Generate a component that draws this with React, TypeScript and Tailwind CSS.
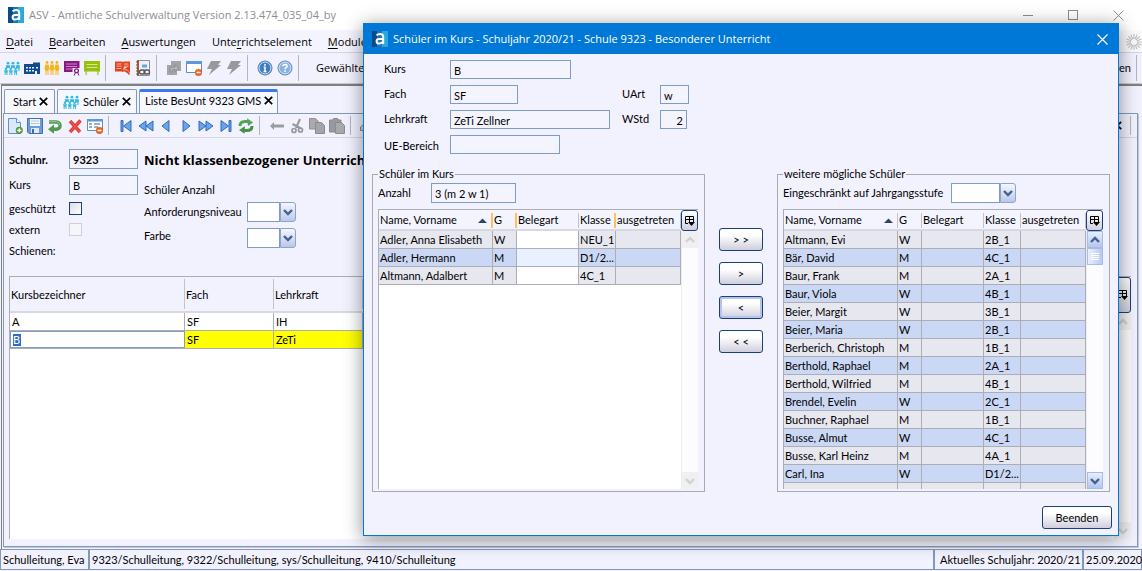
import React from "react";

type Student = { name: string; g: string; klasse: string };

const enrolled: Student[] = [
  { name: "Adler, Anna Elisabeth", g: "W", klasse: "NEU_1" },
  { name: "Adler, Hermann", g: "M", klasse: "D1/2..." },
  { name: "Altmann, Adalbert", g: "M", klasse: "4C_1" },
];

const available: Student[] = [
  { name: "Altmann, Evi", g: "W", klasse: "2B_1" },
  { name: "Bär, David", g: "M", klasse: "4C_1" },
  { name: "Baur, Frank", g: "M", klasse: "2A_1" },
  { name: "Baur, Viola", g: "W", klasse: "4B_1" },
  { name: "Beier, Margit", g: "W", klasse: "3B_1" },
  { name: "Beier, Maria", g: "W", klasse: "2B_1" },
  { name: "Berberich, Christoph", g: "M", klasse: "1B_1" },
  { name: "Berthold, Raphael", g: "M", klasse: "2A_1" },
  { name: "Berthold, Wilfried", g: "M", klasse: "4B_1" },
  { name: "Brendel, Evelin", g: "W", klasse: "2C_1" },
  { name: "Buchner, Raphael", g: "M", klasse: "1B_1" },
  { name: "Busse, Almut", g: "W", klasse: "4C_1" },
  { name: "Busse, Karl Heinz", g: "M", klasse: "4A_1" },
  { name: "Carl, Ina", g: "W", klasse: "D1/2..." },
  { name: "", g: "", klasse: "" },
];

/* ---------- icons ---------- */

function Svg({ children }: { children: React.ReactNode }) {
  return (
    <svg width="16" height="16" viewBox="0 0 16 16" className="block shrink-0" aria-hidden="true">
      {children}
    </svg>
  );
}

function AppLogo() {
  return (
    <Svg>
      <rect width="16" height="16" fill="#0b4a86" />
      <rect x="10" width="6" height="16" fill="#2ba9dc" />
      <rect x="5" width="5" height="16" fill="#1878b4" />
      <path d="M4.500 4.300Q6 3 8.200 3Q11.200 3 11.200 6V13M11.200 8H7.200Q4.600 8 4.600 10.200Q4.600 12.600 7.200 12.600Q9.800 12.600 11 10.600" fill="none" stroke="#fff" strokeWidth="2" />
    </Svg>
  );
}

function Group() {
  return (
    <Svg>
      <g fill="#35b8db">
        <circle cx="4" cy="3.200" r="1.400" />
        <circle cx="9" cy="3.200" r="1.400" />
        <circle cx="14" cy="3.200" r="1.400" />
        <path d="M1.800 5.200h4.400L5.800 8H2.200zM6.800 5.200h4.400l-.4 2.800H7.200zM11.800 5.200H16L15.400 11h-1V8.500h-2.200z" />
        <circle cx="2" cy="8.700" r="1.300" />
        <circle cx="6.800" cy="8.700" r="1.300" />
        <circle cx="11.600" cy="8.700" r="1.300" />
        <path d="M0 10.300h4.100l-.6 2V15h-1v-2.300h-.9V15h-1v-2.700zM4.700 10.300h4.200l-.6 2V15h-1v-2.300h-.9V15h-1v-2.700zM9.500 10.300h4.200l-.6 2V15h-1v-2.300h-.9V15h-1v-2.700z" />
      </g>
    </Svg>
  );
}

function School() {
  return (
    <Svg>
      <path d="M0 4h9V2.500h7V14h-3v-3h-2v3H0z" fill="#0f4c8f" />
      <path d="M2 7h2v1.500H2zM5 7h2v1.500H5zM8 7h2v1.500H8zM2 10h2v1.500H2zM5 10h2v1.500H5zM8 10h2v1.500H8zM12 7h2v1.500h-2z" fill="#e6ecf8" />
    </Svg>
  );
}

function People() {
  return (
    <Svg>
      <g fill="#f5b417">
        <circle cx="3" cy="2.500" r="1.400" />
        <circle cx="8" cy="2.500" r="1.400" />
        <circle cx="13" cy="2.500" r="1.400" />
        <path d="M1.300 4.500h3.400l.8 5H4.500V15h-1v-4h-1v4h-1V9.500H.5zM6.300 4.500h3.400l.8 5H9.500V15h-1v-4h-1v4h-1V9.500h-1zM11.300 4.500h3.400l.8 5h-1V15h-1v-4h-1v4h-1V9.500h-1z" />
      </g>
    </Svg>
  );
}

function Board({ certificate = false }: { certificate?: boolean }) {
  return certificate ? (
    <Svg>
      <path d="M0 1h15.500v11H0z" fill="#8a1683" />
      <path d="M2 4h11M2 6.500h11M2 9h6" stroke="#c98bc5" fill="none" />
      <path d="M8.500 8h7.500v8H8.500z" fill="#f2f2ff" />
      <circle cx="12.500" cy="10.800" r="1.900" fill="none" stroke="#8a1683" strokeWidth="1.300" />
      <path d="M11.500 12.500L10 15.500M13.500 12.500L15 15.500" stroke="#8a1683" />
    </Svg>
  ) : (
    <Svg>
      <path d="M0 1h16v10.500h-1.500V15h-1.200v-3.500H2.700V15H1.500v-3.500H0z" fill="#97bf0d" />
      <path d="M2.500 4.500h11M2.500 7.500h11" stroke="#d5e78f" fill="none" />
    </Svg>
  );
}

function RedBook() {
  return (
    <Svg>
      <path d="M0 1.500h7l.7.7.7-.7H15v11h-4l-1-1H8.500l-.8.7-.7-.7H0z" fill="#e2431e" />
      <path d="M1.500 4h5M1.500 6.200h5M1.500 8.500h5M9 4h4.500M9 6.200h4.500" stroke="#fbd5cb" fill="none" strokeWidth=".8" />
      <path d="M9 7.500l4.800 4.800M9 7.500v2.700M9 7.500h2.700" stroke="#f7d2c9" fill="none" />
      <path d="M11.500 11l3 3.500" stroke="#e2431e" strokeWidth="1.500" />
    </Svg>
  );
}

function Notebook() {
  return (
    <Svg>
      <path d="M3 .5h11.500v15H3z" fill="#eef1f6" stroke="#8b8f99" />
      <path d="M3 0v16" stroke="#a2653a" strokeWidth="2" />
      <path d="M1 2h3M1 5h3M1 8h3M1 11h3M1 14h3" stroke="#6e5344" />
      <path d="M7 4.500h5v3H7z" fill="#6aa2de" />
      <rect x="4.500" y="10" width="5.500" height="4" rx="2" fill="none" stroke="#555" strokeWidth="1.300" />
      <rect x="9" y="10" width="5.500" height="4" rx="2" fill="none" stroke="#555" strokeWidth="1.300" />
    </Svg>
  );
}

function GreyPages() {
  return (
    <Svg>
      <path d="M5 1h10v10h-4v4H1V5h4z" fill="#a3a3a8" />
      <path d="M4 12v-3q0-2 3-2h2V4.500L13 8l-4 3.500V9.500H7.500Q6 9.500 6 12z" fill="#b4b4b9" stroke="#85858b" strokeWidth=".8" />
    </Svg>
  );
}

function Minus() {
  return (
    <g>
      <circle cx="12.500" cy="12.500" r="3.300" fill="#ee6a1f" stroke="#c9480c" strokeWidth=".5" />
      <path d="M10.500 12.500h4" stroke="#fff" strokeWidth="1.400" />
    </g>
  );
}

function WindowMinus() {
  return (
    <Svg>
      <path d="M.5 1.500h15v11H.5z" fill="#fff" stroke="#5c8fca" />
      <path d="M0 1h16v3H0z" fill="#5f97d8" />
      <Minus />
    </Svg>
  );
}

function FormMinus() {
  return (
    <Svg>
      <path d="M.5 1.500h15v11H.5z" fill="#fff" stroke="#5c8fca" />
      <path d="M0 1h16v2.500H0z" fill="#5f97d8" />
      <path d="M2 6h3M7 6h6M2 9h3M7 9h4" stroke="#7894b5" strokeWidth="1.500" />
      <Minus />
    </Svg>
  );
}

function Bolt() {
  return (
    <Svg>
      <path d="M5 1h10l-3 4h3L3 15l3-6H1z" fill="#98989d" />
    </Svg>
  );
}

function Disc({ kind }: { kind: "info" | "help" }) {
  const fill = kind === "info" ? "#3f7fc1" : "#8db4dc";
  return (
    <Svg>
      <circle cx="8" cy="8" r="7" fill={fill} stroke="#5a84b4" />
      <circle cx="8" cy="8" r="5.900" fill="none" stroke="#d6e5f5" strokeWidth=".9" />
      {kind === "info" ? (
        <path d="M8 4v1.700M6.700 7.200H8V11.500M6.500 11.500h3" stroke="#fff" strokeWidth="1.500" fill="none" />
      ) : (
        <path d="M5.900 6.300Q6 4.400 8 4.400Q10.200 4.500 10.100 6.100Q10 7.200 8.800 7.800Q8 8.300 8 9.300M8 10.300v1.600" stroke="#fff" strokeWidth="1.500" fill="none" />
      )}
    </Svg>
  );
}

function NewDoc() {
  return (
    <Svg>
      <path d="M1.500.5h8l4 4v11h-12z" fill="#d9e9fa" stroke="#5b93cf" />
      <path d="M9.500.5v4h4" fill="#fff" stroke="#5b93cf" />
      <circle cx="12.300" cy="12.300" r="3.200" fill="#6aa548" stroke="#3f7a25" strokeWidth=".6" />
      <path d="M10.300 12.300h4M12.300 10.300v4" stroke="#fff" strokeWidth="1.200" />
    </Svg>
  );
}

function Save() {
  return (
    <Svg>
      <path d="M.5.500h15v15H2l-1.500-1.500z" fill="#6b9ddb" stroke="#3f72ae" />
      <path d="M3 1h10v7H3z" fill="#f3f7fc" />
      <path d="M4 3h8M4 5.500h8" stroke="#b4c6da" />
      <path d="M4 10h8v5H4z" fill="#e3e9f0" />
      <path d="M5 11h2v4H5z" fill="#3d6ca5" />
    </Svg>
  );
}

function Undo() {
  return (
    <Svg>
      <path d="M2 4h7.500a3.500 3.500 0 0 1 0 7.200H5" fill="none" stroke="#4d9a50" strokeWidth="3.400" />
      <path d="M7 6.500v9.300L1 11.200z" fill="#4d9a50" />
      <path d="M2 3.700h7.500a3.700 3.700 0 0 1 3.400 3.500" fill="none" stroke="#93cb91" strokeWidth="1" />
    </Svg>
  );
}

function RedCross() {
  return (
    <Svg>
      <path d="M3 3l10 11M13.500 2.500L3 14" stroke="#e33b38" strokeWidth="3.400" />
      <path d="M3 3l10 11M13.500 2.500L3 14" stroke="#f0605c" strokeWidth="1" />
    </Svg>
  );
}

function Nav({ shape }: { shape: "first" | "rewind" | "prev" | "next" | "forward" | "last" }) {
  const paths = {
    first: "M3 2.500h2v11H3zM13 2.500v11L5.500 8z",
    rewind: "M8 3v10L1 8zM15 3v10L8 8z",
    prev: "M11 2.500v11L4 8z",
    next: "M5 2.500v11l7-5.500z",
    forward: "M1 3v10l7-5zM8 3v10l7-5z",
    last: "M11 2.500h2v11h-2zM3 2.500v11L10.500 8z",
  };
  return (
    <Svg>
      <path d={paths[shape]} fill="#6aa5ec" stroke="#2461b5" strokeWidth=".9" />
    </Svg>
  );
}

function Refresh() {
  return (
    <Svg>
      <path d="M2 8Q2 3.500 7 3.500H10" fill="none" stroke="#55a356" strokeWidth="3" />
      <path d="M9 .300l6 4.200-5 3.500z" fill="#55a356" />
      <path d="M14 8Q14 12.500 9 12.500H6" fill="none" stroke="#459348" strokeWidth="3" />
      <path d="M7 8.300l-6 3.800 5.500 3.600z" fill="#459348" />
    </Svg>
  );
}

function GreyArrow() {
  return (
    <Svg>
      <path d="M1 8l4-4v2.500h10v3H5V12z" fill="#9b9ba0" />
    </Svg>
  );
}

function Scissors() {
  return (
    <Svg>
      <path d="M11 1L7 10M3.500 6L12 10.500" stroke="#97979c" strokeWidth="2" />
      <circle cx="5" cy="12.500" r="2" fill="none" stroke="#97979c" strokeWidth="1.700" />
      <circle cx="11.500" cy="12" r="2" fill="none" stroke="#97979c" strokeWidth="1.700" />
    </Svg>
  );
}

function Copy() {
  return (
    <Svg>
      <path d="M.500.500h6l3 3v7.500h-9z" fill="#a9a9ae" stroke="#909096" />
      <path d="M6.500 4.500h6l3 3v8h-9z" fill="#a4a4a9" stroke="#8a8a90" />
    </Svg>
  );
}

function Paste() {
  return (
    <Svg>
      <path d="M.500 2h3l1-1.500h4L9.500 2H12v12H.500z" fill="#98989d" stroke="#8a8a90" />
      <path d="M6.500 4.500h6l3 3v8h-9z" fill="#a8a8ad" stroke="#8a8a90" />
    </Svg>
  );
}

function Print() {
  return (
    <Svg>
      <path d="M4.500 1.500h8v6h-8z" fill="#ddd" stroke="#888" />
      <path d="M.500 12.500V9l4-3.500h8l3 3.500v3.500z" fill="#d4d4d8" stroke="#888" />
    </Svg>
  );
}

function CloseMark() {
  return (
    <svg width="9" height="9" viewBox="0 0 9 9" className="block shrink-0" aria-hidden="true">
      <path d="M.800.800l7.400 7.400M8.200.800L.800 8.200" stroke="#000" strokeWidth="1.700" />
    </svg>
  );
}

function Chevron({ up = false, color = "#48608f" }: { up?: boolean; color?: string }) {
  return (
    <svg width="10" height="8" viewBox="0 0 10 8" className="block" aria-hidden="true">
      <path d={up ? "M1 6l4-4 4 4" : "M1 2l4 4 4-4"} fill="none" stroke={color} strokeWidth="2.400" />
    </svg>
  );
}

function ColumnGlyph() {
  return (
    <svg width="11" height="12" viewBox="0 0 11 12" className="block shrink-0" aria-hidden="true">
      <path d="M4 8.500H1.500v-7h8V7M1 4.500h9M5.500 1.500v6" fill="none" stroke="#000" />
      <path d="M4 7h7L7.500 11z" />
    </svg>
  );
}

function Spinner() {
  return (
    <Svg>
      <g stroke="#bdbdbd" strokeWidth="1.100">
        <path d="M8 0v5M8 11v5M0 8h5M11 8h5M2.300 2.300l3.600 3.600M10.100 10.100l3.600 3.600M13.700 2.300l-3.600 3.600M5.900 10.100l-3.600 3.600M4.900.600l1.900 4.600M9.200 10.800l1.900 4.600M11.100.600L9.200 5.200M6.800 10.800l-1.900 4.600M.600 4.900l4.600 1.900M10.800 9.200l4.600 1.900M15.400 4.900l-4.600 1.900M5.200 9.200L.600 11.100" />
      </g>
    </Svg>
  );
}

/* ---------- small controls ---------- */

function Sep() {
  return <span className="mr-[5px] ml-px w-px self-stretch bg-[#b4b4bc]" />;
}

function Tool({ label, children }: { label: string; children: React.ReactNode }) {
  return (
    <button type="button" aria-label={label} className="block shrink-0">
      {children}
    </button>
  );
}

function Field({ id, value, className }: { id: string; value: string; className: string }) {
  return (
    <input
      id={id}
      defaultValue={value}
      className={`border border-[#7f9dc0] bg-[#f4f4ff] px-[3px] pt-px text-black outline-none ${className}`}
    />
  );
}

function Combo({ id, className }: { id: string; className: string }) {
  return (
    <span className={`flex h-5 ${className}`}>
      <select id={id} className="min-w-0 flex-1 appearance-none border border-[#7f9dc0] bg-white outline-none">
        <option></option>
      </select>
      <span className="flex w-4 items-center justify-center rounded-r-[3px] border border-[#8ea4cc] bg-linear-to-b from-[#f4f7ff] to-[#b9c8ea]">
        <Chevron />
      </span>
    </span>
  );
}

function PushButton({ children, className, focused = false }: { children: React.ReactNode; className: string; focused?: boolean }) {
  return (
    <button
      type="button"
      className={`h-[23px] rounded-[3px] border border-[#1d3f78] bg-linear-to-b from-white from-30% to-[#cfcfdd] ${
        focused ? "ring-2 ring-[#b4c4ee] ring-inset" : ""
      } ${className}`}
    >
      {children}
    </button>
  );
}

function ColumnControl({ className }: { className: string }) {
  return (
    <button
      type="button"
      aria-label="Spalten"
      className={`flex w-[17px] items-center justify-center rounded-[3px] border border-[#1d3f78] bg-linear-to-b from-white to-[#cfcfdd] ${className}`}
    >
      <ColumnGlyph />
    </button>
  );
}

function ScrollEnd({ up = false, disabled = false }: { up?: boolean; disabled?: boolean }) {
  return (
    <button
      type="button"
      aria-label={up ? "Nach oben" : "Nach unten"}
      disabled={disabled}
      className={`flex h-[17px] w-4 shrink-0 items-center justify-center ${
        disabled ? "bg-[#f0f0f2]" : "border border-[#a9bbe0] bg-linear-to-b from-[#e6eeff] to-[#b5c7ee]"
      }`}
    >
      <Chevron up={up} color={disabled ? "#d2d2d6" : "#48608f"} />
    </button>
  );
}

function ScrollBar({ disabled = false }: { disabled?: boolean }) {
  return (
    <div className="flex min-h-0 w-[17px] flex-1 flex-col items-start border-l border-[#ececf4] bg-[#fcfcff]">
      <ScrollEnd up disabled={disabled} />
      {!disabled && (
        <div className="flex h-[17px] w-4 flex-col items-center justify-center gap-px border border-[#a9bbe0] bg-linear-to-r from-[#e9f0ff] to-[#b9caf0]">
          <span className="h-px w-2 bg-white" />
          <span className="h-px w-2 bg-white" />
          <span className="h-px w-2 bg-white" />
          <span className="h-px w-2 bg-white" />
        </div>
      )}
      <div className="flex-1" />
      <ScrollEnd disabled={disabled} />
    </div>
  );
}

/* ---------- student tables ---------- */

function HeadCell({ text, mark = false, sorted = false }: { text: string; mark?: boolean; sorted?: boolean }) {
  return (
    <th className="h-[21px] overflow-hidden border-b-2 border-[#d8d8e4] p-0 font-normal">
      <span className="flex h-[19px] items-center pt-px pl-px">
        <span className="flex-1 text-left whitespace-nowrap">{text}</span>
        {sorted && (
          <svg width="9" height="5" viewBox="0 0 9 5" className="mr-1 shrink-0" aria-hidden="true">
            <path d="M0 5L4.500.500 9 5z" fill="#2f4562" />
          </svg>
        )}
        <span className={mark ? "h-[15px] w-[2px] shrink-0 bg-[#fcc160]" : "h-[15px] w-px shrink-0 bg-[#c2c2cc]"} />
      </span>
    </th>
  );
}

function StudentTable({ rows, marks = false, editable = false }: { rows: Student[]; marks?: boolean; editable?: boolean }) {
  const cell = "h-[18px] truncate border-r border-b border-[#adadb5] p-0 pl-px leading-[17px]";
  return (
    <div className="flex min-h-0 flex-1 border-t border-l border-[#adadb5]">
      <div className="min-w-0 flex-1 overflow-hidden bg-white">
        <table className="w-full table-fixed border-separate border-spacing-0">
          <colgroup>
            <col />
            <col className="w-[24px]" />
            <col className="w-[62px]" />
            <col className="w-[37px]" />
            <col className="w-[65px]" />
          </colgroup>
          <thead className="bg-[#f4f4ff]">
            <tr>
              <HeadCell text="Name, Vorname" sorted mark={marks} />
              <HeadCell text="G" mark={marks} />
              <HeadCell text="Belegart" />
              <HeadCell text="Klasse" mark={marks} />
              <HeadCell text="ausgetreten" />
            </tr>
          </thead>
          <tbody>
            {rows.map((r, i) => (
              <tr key={i} className={i % 2 ? "bg-[#cbd8f5]" : "bg-[#e7e7f0]"}>
                <td className={cell}>{r.name}</td>
                <td className={cell}>{r.g}</td>
                <td className={`${cell} ${editable ? (i % 2 ? "bg-[#e9f0ff]" : "bg-white") : ""}`} />
                <td className={cell}>{r.klasse}</td>
                <td className={cell} />
              </tr>
            ))}
          </tbody>
        </table>
      </div>
      <div className="flex w-[17px] shrink-0 flex-col">
        <ColumnControl className="h-[21px]" />
        <ScrollBar disabled={editable} />
      </div>
    </div>
  );
}

function StudentGroup({ title, top, children }: { title: string; top: React.ReactNode; children: React.ReactNode }) {
  return (
    <fieldset className="flex w-[333px] min-w-0 flex-col border border-[#a9a9b3] pr-[6px] pb-[2px] pl-[5px]">
      <legend className="h-[14px] px-px leading-[14px]">{title}</legend>
      <div className="mt-[2px] mb-[6px] flex h-5 shrink-0 items-center">{top}</div>
      {children}
    </fieldset>
  );
}

/* ---------- dialog ---------- */

function Dialog() {
  return (
    <section
      role="dialog"
      aria-label="Schüler im Kurs"
      className="absolute top-[23px] right-[23px] bottom-[35px] left-[363px] flex flex-col border border-[#0078d7] bg-[#f2f2ff] shadow-[0_3px_18px_rgba(0,0,0,0.45)]"
    >
      <header className="flex h-[30px] shrink-0 items-center bg-[#0078d7] pr-[10px] pl-2 text-white">
        <AppLogo />
        <h2 className="ml-[5px] flex-1 font-['Open_Sans','Noto_Sans',sans-serif]">
          Schüler im Kurs - Schuljahr 2020/21 - Schule 9323 - Besonderer Unterricht
        </h2>
        <button type="button" aria-label="Schließen">
          <svg width="11" height="11" viewBox="0 0 11 11" className="block" aria-hidden="true">
            <path d="M.500.500l10 10M10.500.500l-10 10" stroke="#fff" strokeWidth="1.200" />
          </svg>
        </button>
      </header>

      <div className="flex min-h-0 flex-1 flex-col">
        <div className="grid shrink-0 grid-cols-[66px_172px_38px_auto] gap-y-[6px] pt-[6px] pl-5">
          <label htmlFor="d-kurs" className="leading-[17px]">Kurs</label>
          <Field id="d-kurs" value="B" className="col-span-3 h-[19px] w-[121px]" />
          <label htmlFor="d-fach" className="leading-[17px]">Fach</label>
          <Field id="d-fach" value="SF" className="h-[19px] w-[68px]" />
          <label htmlFor="d-uart" className="leading-[17px]">UArt</label>
          <Field id="d-uart" value="w" className="h-[19px] w-[29px]" />
          <label htmlFor="d-lehr" className="leading-[17px]">Lehrkraft</label>
          <Field id="d-lehr" value="ZeTi Zellner" className="h-[19px] w-[160px]" />
          <label htmlFor="d-wstd" className="leading-[17px]">WStd</label>
          <Field id="d-wstd" value="2" className="h-[19px] w-[27px] text-right" />
          <label htmlFor="d-ue" className="leading-[21px]">UE-Bereich</label>
          <Field id="d-ue" value="" className="col-span-3 h-[19px] w-[110px]" />
        </div>

        <div className="mt-[11px] flex min-h-0 flex-1 justify-between px-2">
          <StudentGroup
            title="Schüler im Kurs"
            top={
              <>
                <label htmlFor="d-anz" className="w-[53px]">Anzahl</label>
                <Field id="d-anz" value="3 (m 2 w 1)" className="h-5 w-[85px]" />
              </>
            }
          >
            <StudentTable rows={enrolled} marks editable />
          </StudentGroup>
          <div className="flex flex-col gap-[11px] pt-[61px]">
            <PushButton className="w-[44px]">&gt; &gt;</PushButton>
            <PushButton className="w-[44px]">&gt;</PushButton>
            <PushButton className="w-[44px]" focused>&lt;</PushButton>
            <PushButton className="w-[44px]">&lt; &lt;</PushButton>
          </div>
          <StudentGroup
            title="weitere mögliche Schüler"
            top={
              <>
                <label htmlFor="d-jgst" className="w-[168px] whitespace-nowrap">Eingeschränkt auf Jahrgangsstufe</label>
                <Combo id="d-jgst" className="w-[65px]" />
              </>
            }
          >
            <StudentTable rows={available} />
          </StudentGroup>
        </div>

        <div className="flex shrink-0 justify-end pt-[14px] pr-[6px] pb-[6px]">
          <PushButton className="w-[70px]">Beenden</PushButton>
        </div>
      </div>
    </section>
  );
}

/* ---------- main window ---------- */

function MenuItem({ before = "", hot, after }: { before?: string; hot: string; after: string }) {
  return (
    <button type="button">
      {before}
      <span className="underline underline-offset-2">{hot}</span>
      {after}
    </button>
  );
}

function CourseTable() {
  const head = "h-[36px] border-b-2 border-[#d8d8e4] p-0 text-left font-normal";
  const cell = "h-[18px] border-r border-b border-[#adadb5] p-0 pl-[2px] leading-[17px]";
  return (
    <div className="mr-[6px] mb-[7px] ml-[5px] flex min-h-0 flex-1 border-t border-l border-[#adadb5]">
      <div className="min-w-0 flex-1 bg-white">
        <table className="w-full table-fixed border-separate border-spacing-0">
          <colgroup>
            <col className="w-[175px]" />
            <col className="w-[89px]" />
            <col className="w-[89px]" />
            <col />
          </colgroup>
          <thead className="bg-[#f2f2ff]">
            <tr>
              {["Kursbezeichner", "Fach", "Lehrkraft", ""].map((h) => (
                <th key={h} className={head}>
                  <span className="flex h-[30px] items-center border-r border-[#c2c2cc] pt-px pl-px">{h}</span>
                </th>
              ))}
            </tr>
          </thead>
          <tbody>
            <tr>
              <td className={cell}>A</td>
              <td className={cell}>SF</td>
              <td className={cell}>IH</td>
              <td className={cell} />
            </tr>
            <tr className="bg-[#ffff00]">
              <td className="h-[18px] border-b border-[#adadb5] bg-white p-0">
                <div className="flex h-[17px] items-center border border-[#7f9dc0] pl-[2px]">
                  <input aria-label="Kursbezeichner" defaultValue="B" className="h-3 w-2 bg-[#316ac5] text-white outline-none" />
                </div>
              </td>
              <td className={cell}>SF</td>
              <td className={cell}>ZeTi</td>
              <td className={cell} />
            </tr>
          </tbody>
        </table>
      </div>
      <div className="flex w-[17px] shrink-0 flex-col">
        <ColumnControl className="h-[36px]" />
        <ScrollBar disabled />
      </div>
    </div>
  );
}

export default function App() {
  const tab = "flex h-6 items-center gap-[3px] rounded-t-[2px] border border-b-0 border-[#8299bb] bg-[#f7f7ff]";
  return (
    <div className="relative flex h-screen flex-col overflow-hidden bg-[#f2f2ff] font-['Lato','Open_Sans',sans-serif] text-[11px] leading-[14px] text-black">
      <header className="flex h-[30px] shrink-0 items-center bg-white pr-[18px] pl-2 text-[#8e8e8e]">
        <AppLogo />
        <h1 className="ml-[5px] flex-1 font-['Open_Sans','Noto_Sans',sans-serif]">ASV - Amtliche Schulverwaltung Version 2.13.474_035_04_by</h1>
        <div className="flex items-center gap-[35px]">
          <button type="button" aria-label="Minimieren" className="h-px w-[10px] bg-[#8e8e8e]" />
          <button type="button" aria-label="Maximieren" className="size-[10px] border border-[#8e8e8e]" />
          <button type="button" aria-label="Fenster schließen">
            <svg width="11" height="11" viewBox="0 0 11 11" className="block" aria-hidden="true">
              <path d="M.500.500l10 10M10.500.500l-10 10" stroke="#8e8e8e" />
            </svg>
          </button>
        </div>
      </header>

      <nav className="flex h-[23px] shrink-0 items-center gap-4 border-b border-[#d5d5e6] bg-linear-to-r from-[#f2f2ff] to-[#fafafc] pt-px pl-[6px] font-['Open_Sans','Noto_Sans',sans-serif]">
        <MenuItem hot="D" after="atei" />
        <MenuItem hot="B" after="earbeiten" />
        <MenuItem hot="A" after="uswertungen" />
        <MenuItem before="Unte" hot="r" after="richtselement" />
        <MenuItem hot="M" after="odule" />
        <span className="ml-auto">
          <Spinner />
        </span>
      </nav>

      <div className="flex h-[31px] shrink-0 items-center gap-1 border-b border-[#c9c9d4] py-[2px] pl-1">
        <Tool label="Schüler"><Group /></Tool>
        <Tool label="Schule"><School /></Tool>
        <Tool label="Lehrkräfte"><People /></Tool>
        <Tool label="Abschluss"><Board certificate /></Tool>
        <Tool label="Unterricht"><Board /></Tool>
        <Sep />
        <Tool label="Verzeichnis"><RedBook /></Tool>
        <Tool label="Notizbuch"><Notebook /></Tool>
        <Sep />
        <Tool label="Fenster"><GreyPages /></Tool>
        <Tool label="Fenster schließen"><WindowMinus /></Tool>
        <Tool label="Aktion"><Bolt /></Tool>
        <Tool label="Weitere Aktion"><Bolt /></Tool>
        <Sep />
        <Tool label="Info"><Disc kind="info" /></Tool>
        <Tool label="Hilfe"><Disc kind="help" /></Tool>
        <Sep />
        <span className="ml-2 font-['Open_Sans','Noto_Sans',sans-serif]">Gewählte</span>
        <span className="ml-auto">en</span>
        <Sep />
      </div>

      <main className="ml-px flex min-h-0 flex-1 flex-col border-t-2 border-l border-[#808080] pr-1 pb-[2px] pl-px">
        <div className="flex h-[27px] shrink-0 items-end gap-[2px] pl-px">
          <div className={`${tab} w-[51px] pl-2`}>
            <span>Start</span>
            <CloseMark />
          </div>
          <div className={`${tab} w-[80px] pl-[5px]`}>
            <Group />
            <span className="pl-px">Schüler</span>
            <CloseMark />
          </div>
          <div className={`${tab} w-[139px] border-t-[3px] border-t-[#3b78f0] pb-1 pl-[5px]`}>
            <span>Liste BesUnt 9323 GMS</span>
            <CloseMark />
          </div>
        </div>

        <div className="flex min-h-0 flex-1 flex-col border border-[#8299bb] shadow-[1px_1px_0_#c6c6d4]">
          <div className="flex h-6 shrink-0 items-center gap-1 border-b border-[#d5d5e6] py-[2px] pr-[1px] pl-[3px]">
            <Tool label="Neu"><NewDoc /></Tool>
            <Tool label="Speichern"><Save /></Tool>
            <Tool label="Rückgängig"><Undo /></Tool>
            <Tool label="Löschen"><RedCross /></Tool>
            <Tool label="Maske"><FormMinus /></Tool>
            <Sep />
            <Tool label="Erster"><Nav shape="first" /></Tool>
            <Tool label="Zurückspulen"><Nav shape="rewind" /></Tool>
            <Tool label="Voriger"><Nav shape="prev" /></Tool>
            <Tool label="Nächster"><Nav shape="next" /></Tool>
            <Tool label="Vorspulen"><Nav shape="forward" /></Tool>
            <Tool label="Letzter"><Nav shape="last" /></Tool>
            <Tool label="Aktualisieren"><Refresh /></Tool>
            <Sep />
            <Tool label="Zurück"><GreyArrow /></Tool>
            <Tool label="Ausschneiden"><Scissors /></Tool>
            <Tool label="Kopieren"><Copy /></Tool>
            <Tool label="Einfügen"><Paste /></Tool>
            <Sep />
            <Tool label="Drucken"><Print /></Tool>
            <span className="mr-[3px] ml-auto"><CloseMark /></span>
            <Sep />
          </div>

          <div className="flex h-[138px] shrink-0 gap-[6px] pt-[11px] pl-[5px]">
            <div className="grid grid-cols-[60px_69px] content-start">
              <label htmlFor="m-nr" className="h-[26px] leading-[22px] font-bold">Schulnr.</label>
              <Field id="m-nr" value="9323" className="h-5 w-[69px] font-bold" />
              <label htmlFor="m-kurs" className="h-[26px] leading-5">Kurs</label>
              <Field id="m-kurs" value="B" className="h-5 w-[69px]" />
              <label htmlFor="m-gesch" className="h-[21px] leading-[16px]">geschützt</label>
              <input id="m-gesch" type="checkbox" className="mt-px size-[13px] appearance-none border border-[#1d3f78] bg-linear-to-br from-[#dcdce4] to-white" />
              <label htmlFor="m-ext" className="h-[21px] leading-[16px]">extern</label>
              <input id="m-ext" type="checkbox" disabled className="mt-px size-[13px] appearance-none border border-[#cfcfd8] bg-[#f6f6fa]" />
              <span className="h-[21px] leading-[16px]">Schienen:</span>
            </div>
            <div className="flex flex-col">
              <h2 className="h-[33px] font-['Open_Sans','Noto_Sans',sans-serif] text-[13px] leading-[22px] font-bold whitespace-nowrap">
                Nicht klassenbezogener Unterricht
              </h2>
              <span className="h-5 leading-[16px]">Schüler Anzahl</span>
              <div className="flex h-[26px] items-start">
                <label htmlFor="m-niv" className="w-[103px] leading-5">Anforderungsniveau</label>
                <Combo id="m-niv" className="w-[49px]" />
              </div>
              <div className="flex items-start">
                <label htmlFor="m-farbe" className="w-[103px] leading-4">Farbe</label>
                <Combo id="m-farbe" className="w-[49px]" />
              </div>
            </div>
          </div>

          <CourseTable />
        </div>
      </main>

      <footer className="mb-px flex h-[21px] shrink-0 gap-[2px] border border-[#8299bb] bg-[#8299bb] leading-[19px]">
        <span className="w-[87px] bg-[#f2f2ff] pl-[2px]">Schulleitung, Eva</span>
        <span className="flex-1 bg-[#f2f2ff] px-[2px]">9323/Schulleitung, 9322/Schulleitung, sys/Schulleitung, 9410/Schulleitung</span>
        <span className="w-[147px] bg-[#f2f2ff] pl-[5px]">Aktuelles Schuljahr: 2020/21</span>
        <span className="w-[57px] bg-[#f2f2ff] pl-[2px]">25.09.2020</span>
      </footer>

      <Dialog />
    </div>
  );
}
